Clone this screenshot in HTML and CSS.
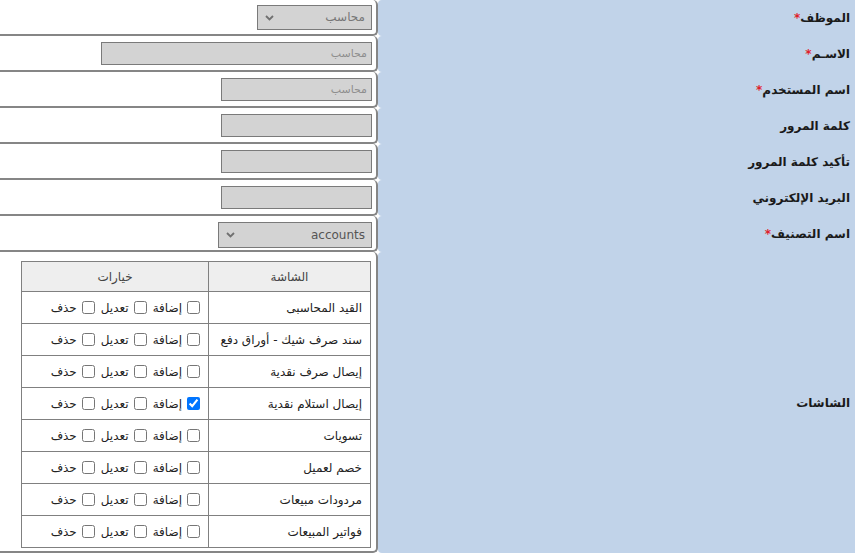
FILE: index.html
```html
<!DOCTYPE html>
<html lang="ar" dir="rtl">
<head>
<meta charset="utf-8">
<title>User</title>
<link rel="stylesheet" href="styles.css">
</head>
<body>
<div class="form">
  <div class="row">
    <div class="label">الموظف<span class="req">*</span></div>
    <div class="field">
      <div class="sel sel-sm">
        <select disabled><option>محاسب</option></select>
        <svg class="chev" width="9" height="6" viewBox="0 0 9 6"><path d="M1 1l3.5 3.5L8 1" fill="none" stroke="#707070" stroke-width="1.8"/></svg>
      </div>
    </div>
  </div>
  <div class="row">
    <div class="label">الاسـم<span class="req">*</span></div>
    <div class="field"><input class="inp inp-lg" type="text" placeholder="محاسب"></div>
  </div>
  <div class="row">
    <div class="label">اسم المستخدم<span class="req">*</span></div>
    <div class="field"><input class="inp" type="text" placeholder="محاسب"></div>
  </div>
  <div class="row">
    <div class="label">كلمة المرور</div>
    <div class="field"><input class="inp" type="password"></div>
  </div>
  <div class="row">
    <div class="label">تأكيد كلمة المرور</div>
    <div class="field"><input class="inp" type="password"></div>
  </div>
  <div class="row">
    <div class="label">البريد الإلكتروني</div>
    <div class="field"><input class="inp" type="text"></div>
  </div>
  <div class="row">
    <div class="label">اسم التصنيف<span class="req">*</span></div>
    <div class="field">
      <div class="sel sel-md">
        <select><option>accounts</option></select>
        <svg class="chev" width="9" height="6" viewBox="0 0 9 6"><path d="M1 1l3.5 3.5L8 1" fill="none" stroke="#707070" stroke-width="1.8"/></svg>
      </div>
    </div>
  </div>
  <div class="row row-last">
    <div class="label">الشاشات</div>
    <div class="field field-table">
      <table class="perm">
        <thead>
          <tr><th class="c-name">الشاشة</th><th class="c-opt">خيارات</th></tr>
        </thead>
        <tbody>
          <tr><td class="c-name">القيد المحاسبى</td><td class="c-opt"><div class="opts"><label><input type="checkbox">إضافة</label><label><input type="checkbox">تعديل</label><label><input type="checkbox">حذف</label></div></td></tr>
          <tr><td class="c-name">سند صرف شيك - أوراق دفع</td><td class="c-opt"><div class="opts"><label><input type="checkbox">إضافة</label><label><input type="checkbox">تعديل</label><label><input type="checkbox">حذف</label></div></td></tr>
          <tr><td class="c-name">إيصال صرف نقدية</td><td class="c-opt"><div class="opts"><label><input type="checkbox">إضافة</label><label><input type="checkbox">تعديل</label><label><input type="checkbox">حذف</label></div></td></tr>
          <tr><td class="c-name">إيصال استلام نقدية</td><td class="c-opt"><div class="opts"><label><input type="checkbox" checked>إضافة</label><label><input type="checkbox">تعديل</label><label><input type="checkbox">حذف</label></div></td></tr>
          <tr><td class="c-name">تسويات</td><td class="c-opt"><div class="opts"><label><input type="checkbox">إضافة</label><label><input type="checkbox">تعديل</label><label><input type="checkbox">حذف</label></div></td></tr>
          <tr><td class="c-name">خصم لعميل</td><td class="c-opt"><div class="opts"><label><input type="checkbox">إضافة</label><label><input type="checkbox">تعديل</label><label><input type="checkbox">حذف</label></div></td></tr>
          <tr><td class="c-name">مردودات مبيعات</td><td class="c-opt"><div class="opts"><label><input type="checkbox">إضافة</label><label><input type="checkbox">تعديل</label><label><input type="checkbox">حذف</label></div></td></tr>
          <tr><td class="c-name">فواتير المبيعات</td><td class="c-opt"><div class="opts"><label><input type="checkbox">إضافة</label><label><input type="checkbox">تعديل</label><label><input type="checkbox">حذف</label></div></td></tr>
        </tbody>
      </table>
    </div>
  </div>
</div>
</body>
</html>
```
FILE: styles.css
```css
html, body {
  margin: 0;
  padding: 0;
  background: #ffffff;
}
body {
  font-family: Tahoma, "DejaVu Sans", sans-serif;
  font-size: 12px;
  color: #222;
  overflow: hidden;
}
.form {
  display: flex;
  flex-direction: column;
  width: 855px;
}
.row {
  display: flex;
  height: 36px;
}
.label {
  flex: 1;
  background: #c1d3e9;
  display: flex;
  align-items: center;
  justify-content: flex-start;
  padding-right: 5px;
  font-weight: bold;
  font-size: 12px;
  color: #1a1a1a;
  border-radius: 4px 0 0 4px;
}
.req {
  color: #e0202a;
}
.field {
  width: 378px;
  flex: none;
  box-sizing: border-box;
  border-right: 2px solid #868686;
  border-bottom: 2px solid #868686;
  border-radius: 0 5px 5px 0;
  display: flex;
  align-items: center;
  padding-right: 4px;
}
.inp {
  box-sizing: border-box;
  width: 151px;
  height: 23px;
  margin: 0;
  border: 1px solid #7a7a7a;
  background: #d3d3d3;
  font-family: Tahoma, "DejaVu Sans", sans-serif;
  font-size: 11px;
  padding: 0 4px;
  color: #555;
  outline: none;
}
.inp-lg {
  width: 271px;
}
.inp::placeholder {
  color: #8e8e8e;
}
.sel {
  position: relative;
  height: 25px;
}
.sel select {
  appearance: none;
  -webkit-appearance: none;
  box-sizing: border-box;
  width: 100%;
  height: 100%;
  margin: 0;
  border: 1px solid #7a7a7a;
  background: #d3d3d3;
  font-family: Tahoma, "DejaVu Sans", sans-serif;
  font-size: 12px;
  color: #777;
  padding: 0 6px;
  opacity: 1;
}
.sel-sm { width: 115px; }
.sel-md {
  width: 154px;
  height: 26px;
  margin-top: 3px;
}
.sel-md select { color: #555; }
.chev {
  position: absolute;
  left: 8px;
  top: 10px;
}
.row-last {
  height: 301px;
}
.field-table {
  align-items: flex-start;
  padding-top: 9px;
  padding-right: 5px;
}
.perm {
  border-collapse: collapse;
  width: 350px;
  border: 1px solid #808080;
}
.perm th, .perm td {
  border: 1px solid #808080;
  padding: 0 8px;
  height: 31px;
  font-size: 12px;
}
.perm th {
  background: #eeeeee;
  font-weight: normal;
  color: #444;
  text-align: center;
  height: 29px;
}
.perm td {
  color: #222;
  text-align: right;
}
.c-name {
  width: 145px;
}
.opts {
  display: flex;
  gap: 6px;
  align-items: center;
}
.opts label {
  display: flex;
  align-items: center;
  gap: 5px;
  color: #222;
}
.opts input {
  margin: 0;
  width: 13px;
  height: 13px;
}
```
